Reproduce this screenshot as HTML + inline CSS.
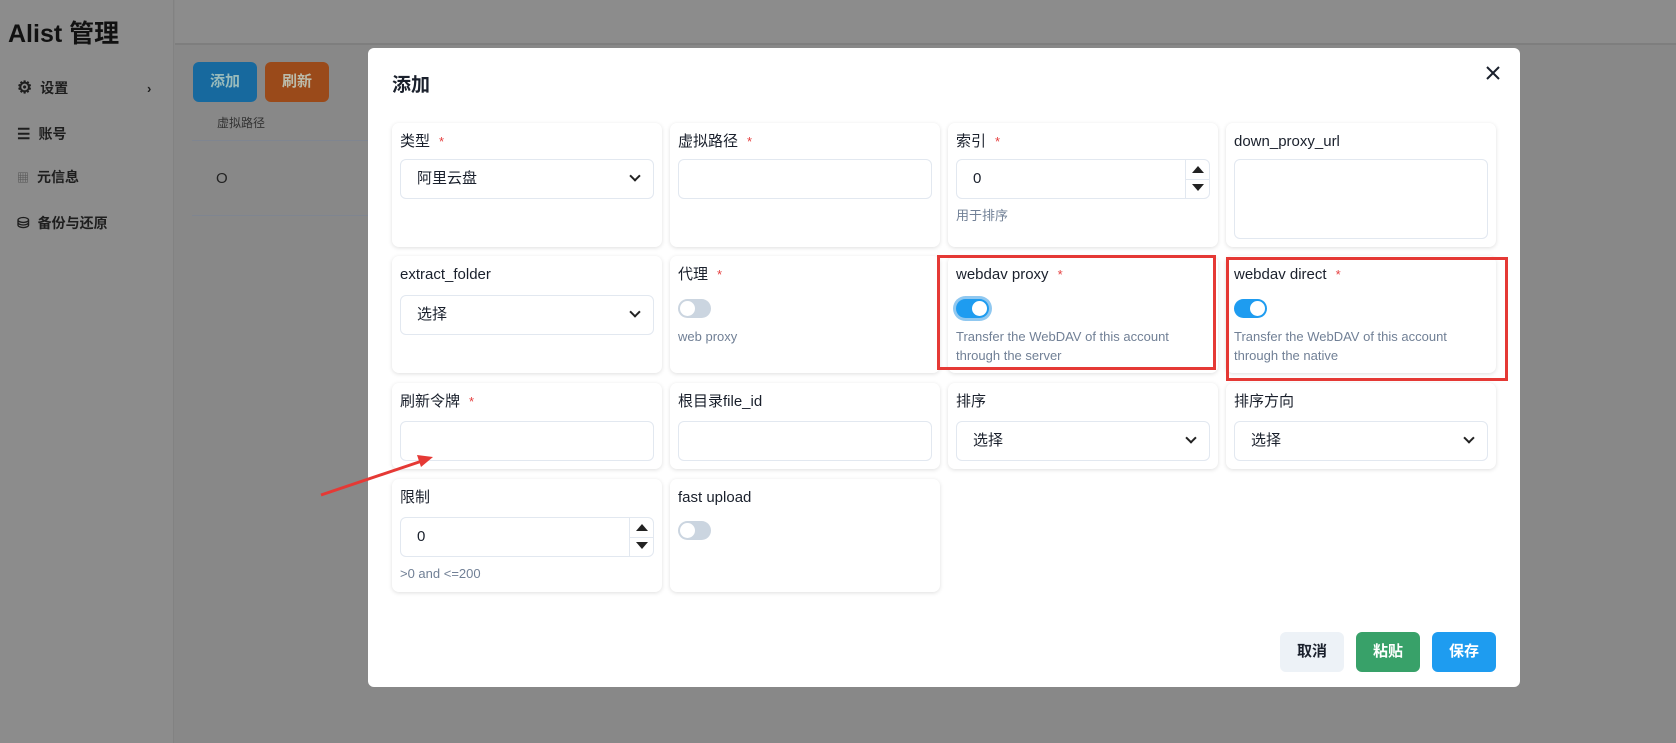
<!DOCTYPE html>
<html><head><meta charset="utf-8"><style>
*{box-sizing:border-box;margin:0;padding:0}
body{width:1676px;height:743px;overflow:hidden;position:relative;background:#888;font-family:"Liberation Sans","Noto Sans CJK SC",sans-serif;color:#1a202c}
.abs{position:absolute}
.side{left:0;top:0;width:174px;height:743px;background:#8c8c8c;border-right:1px solid #828282}
.top{left:175px;top:0;right:0;height:45px;background:#8c8c8c;border-bottom:2px solid #7e7e7e}
.nav{left:17px;font-size:14px;color:#1e1e1e;display:flex;align-items:center;gap:8px;font-weight:bold}
.modal{left:368px;top:48px;width:1152px;height:639px;background:#fff;border-radius:6px}
.card{position:absolute;width:270px;background:#fff;border-radius:7px;box-shadow:0 1px 4px rgba(0,0,0,.13);padding:0 8px}
.lbl{position:absolute;left:8px;top:9px;font-size:15px;line-height:20px;height:20px;color:#1a202c;white-space:nowrap}
.lbl i{color:#e53e3e;font-style:normal;margin-left:9px;font-size:13px;line-height:20px;vertical-align:top}
.inp{position:absolute;left:8px;width:254px;height:40px;border:1px solid #e2e8f0;border-radius:6px;background:#fff;font-size:15px;padding-left:16px;line-height:38px}
.chev{position:absolute;right:14px;top:12px;width:8px;height:8px;border-right:2px solid #222;border-bottom:2px solid #222;transform:rotate(45deg)}
.spin{position:absolute;right:0;top:0;width:24px;height:38px;border-left:1px solid #e2e8f0}
.spin:before{content:"";position:absolute;left:6px;top:6px;border:6px solid transparent;border-top:0;border-bottom:7px solid #222}
.spin:after{content:"";position:absolute;left:6px;top:24px;border:6px solid transparent;border-bottom:0;border-top:7px solid #222}
.spin span{position:absolute;left:0;right:0;top:19px;border-top:1px solid #e2e8f0}
.hint{position:absolute;left:8px;font-size:13px;color:#718096;line-height:19px}
.tg{position:absolute;left:8px;width:33px;height:19px;border-radius:10px;background:#cbd5e0}
.tg:after{content:"";position:absolute;left:2px;top:2px;width:15px;height:15px;border-radius:50%;background:#fff}
.tg.on{background:#1e9cf0}
.tg.on:after{left:16px}
.btn{position:absolute;top:632px;width:64px;height:40px;border-radius:6px;font-size:15px;font-weight:bold;text-align:center;line-height:40px}
.red{position:absolute;border:3px solid #e53935}
</style></head><body>
<div class="abs side"></div>
<div class="abs top"></div>
<div class="abs" style="left:8px;top:14px;font-size:25px;color:#111;font-weight:bold">Alist 管理</div>
<div class="abs nav" style="top:78px"><span style="font-size:17px">⚙</span>设置<span style="position:absolute;left:130px;font-size:13px">›</span></div>
<div class="abs nav" style="top:124px"><span style="font-size:15px">☰</span>账号</div>
<div class="abs nav" style="top:167px"><span style="font-size:12px;color:#555">▦</span>元信息</div>
<div class="abs nav" style="top:213px"><span style="font-size:15px">⛁</span>备份与还原</div>
<div class="abs" style="left:193px;top:62px;width:64px;height:40px;background:#17699e;border-radius:6px;color:#9bb;font-weight:bold;font-size:15px;text-align:center;line-height:40px">添加</div>
<div class="abs" style="left:265px;top:62px;width:64px;height:40px;background:#9a4a1a;border-radius:6px;color:#bba;font-weight:bold;font-size:15px;text-align:center;line-height:40px">刷新</div>
<div class="abs" style="left:217px;top:114px;font-size:12px;color:#333">虚拟路径</div>
<div class="abs" style="left:192px;top:140px;width:180px;border-top:1px solid #7f8590"></div>
<div class="abs" style="left:216px;top:170px;font-size:15px;color:#222">O</div>
<div class="abs" style="left:192px;top:215px;width:180px;border-top:1px solid #7f8590"></div>

<div class="abs modal">
<div class="abs" style="left:24px;top:22px;font-size:19px;font-weight:bold">添加</div>
<svg class="abs" style="left:1118px;top:18px" width="14" height="14"><path d="M1 1L13 13M13 1L1 13" stroke="#1a202c" stroke-width="2"/></svg>
</div>

<!-- row1 -->
<div class="card" style="left:392px;top:123px;height:124px"><div class="lbl">类型<i>*</i></div><div class="inp" style="top:36px">阿里云盘<div class="chev"></div></div></div>
<div class="card" style="left:670px;top:123px;height:124px"><div class="lbl">虚拟路径<i>*</i></div><div class="inp" style="top:36px"></div></div>
<div class="card" style="left:948px;top:123px;height:124px"><div class="lbl">索引<i>*</i></div><div class="inp" style="top:36px">0<div class="spin"><span></span></div></div><div class="hint" style="top:83px">用于排序</div></div>
<div class="card" style="left:1226px;top:123px;height:124px"><div class="lbl">down_proxy_url</div><div class="inp" style="top:36px;height:80px"></div></div>
<!-- row2 -->
<div class="card" style="left:392px;top:256px;height:117px"><div class="lbl">extract_folder</div><div class="inp" style="top:39px">选择<div class="chev"></div></div></div>
<div class="card" style="left:670px;top:256px;height:117px"><div class="lbl">代理<i>*</i></div><div class="tg" style="top:43px"></div><div class="hint" style="top:71px">web proxy</div></div>
<div class="card" style="left:948px;top:256px;height:117px"><div class="lbl">webdav proxy<i>*</i></div><div class="tg on" style="top:43px;box-shadow:0 0 0 3px #90c8f0"></div><div class="hint" style="top:71px">Transfer the WebDAV of this account<br>through the server</div></div>
<div class="card" style="left:1226px;top:256px;height:117px"><div class="lbl">webdav direct<i>*</i></div><div class="tg on" style="top:43px"></div><div class="hint" style="top:71px">Transfer the WebDAV of this account<br>through the native</div></div>
<!-- row3 -->
<div class="card" style="left:392px;top:383px;height:86px"><div class="lbl">刷新令牌<i>*</i></div><div class="inp" style="top:38px"></div></div>
<div class="card" style="left:670px;top:383px;height:86px"><div class="lbl">根目录file_id</div><div class="inp" style="top:38px"></div></div>
<div class="card" style="left:948px;top:383px;height:86px"><div class="lbl">排序</div><div class="inp" style="top:38px">选择<div class="chev"></div></div></div>
<div class="card" style="left:1226px;top:383px;height:86px"><div class="lbl">排序方向</div><div class="inp" style="top:38px">选择<div class="chev"></div></div></div>
<!-- row4 -->
<div class="card" style="left:392px;top:479px;height:113px"><div class="lbl">限制</div><div class="inp" style="top:38px">0<div class="spin"><span></span></div></div><div class="hint" style="top:85px">&gt;0 and &lt;=200</div></div>
<div class="card" style="left:670px;top:479px;height:113px"><div class="lbl">fast upload</div><div class="tg" style="top:42px"></div></div>

<div class="btn" style="left:1280px;background:#edf2f7;color:#1a202c">取消</div>
<div class="btn" style="left:1356px;background:#38a169;color:#fff">粘贴</div>
<div class="btn" style="left:1432px;background:#1e9cf0;color:#fff">保存</div>

<div class="red" style="left:937px;top:255px;width:279px;height:115px"></div>
<div class="red" style="left:1226px;top:257px;width:282px;height:124px"></div>
<svg class="abs" style="left:0;top:0" width="1676" height="743"><line x1="321" y1="495" x2="425" y2="460" stroke="#e53935" stroke-width="3"/><polygon points="433,457 417,455 421,467" fill="#e53935"/></svg>
</body></html>
